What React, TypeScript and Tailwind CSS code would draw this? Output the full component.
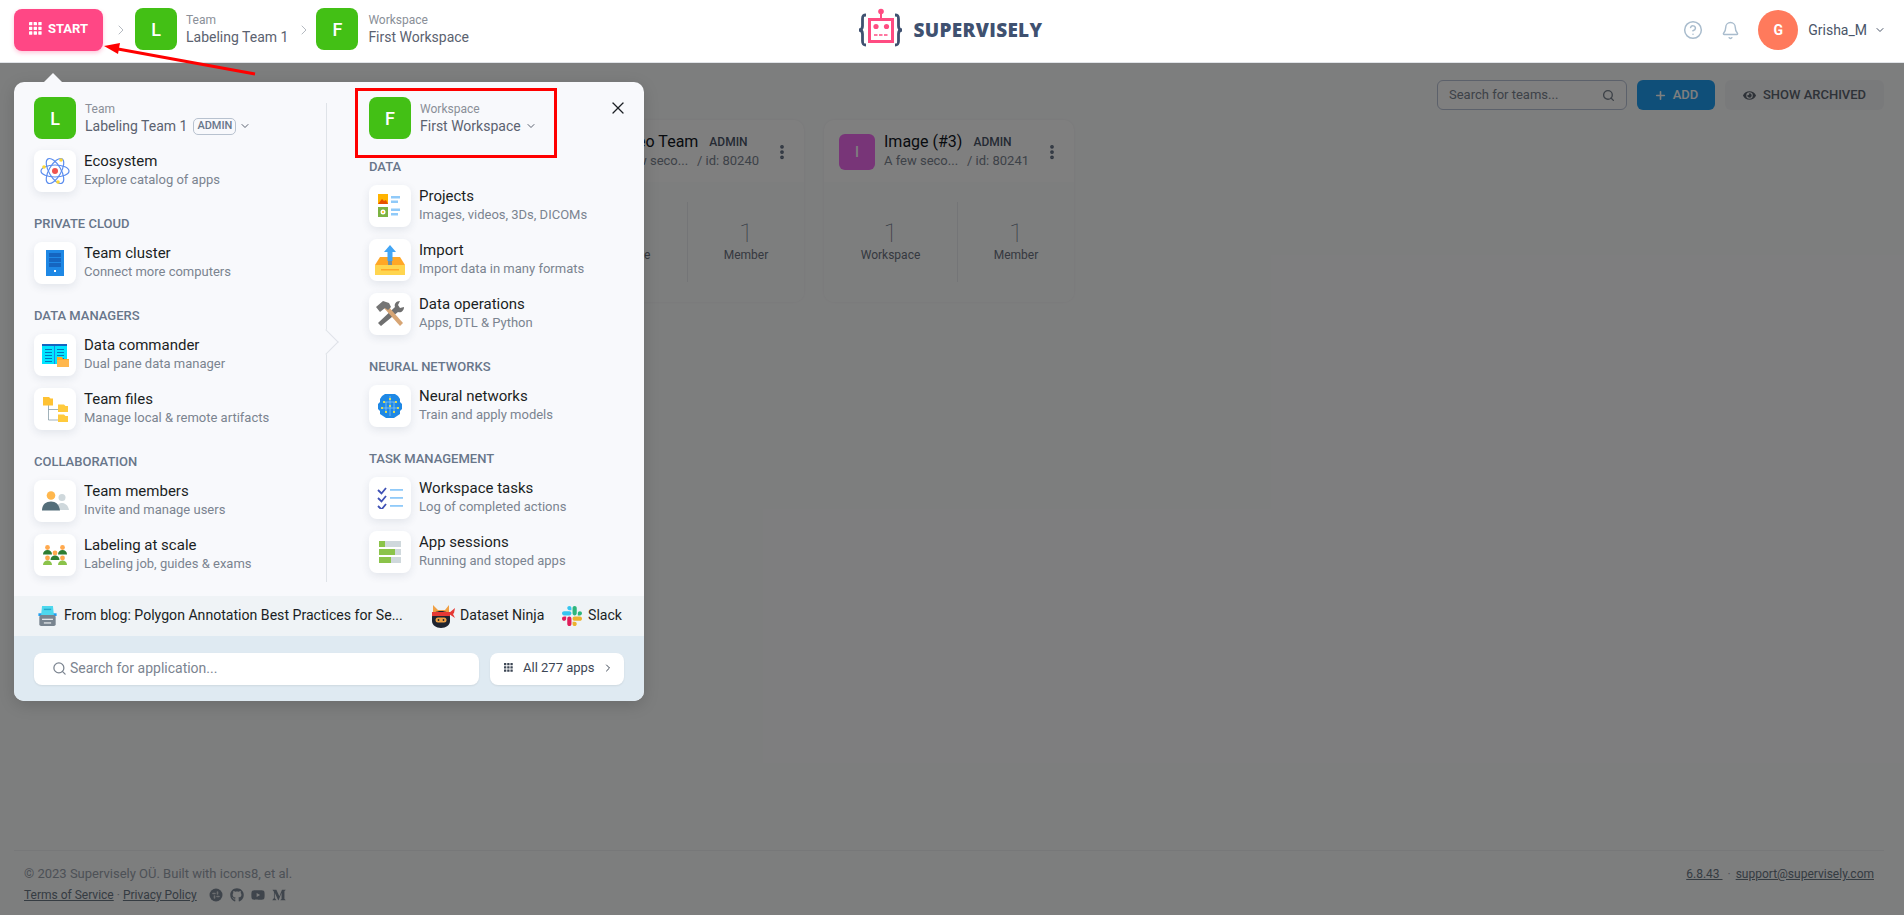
import React from 'react';
import { Bell, ChevronDown, ChevronRight, CircleHelp, MoreVertical, Plus, Search, X } from 'lucide-react';
import { FaEye, FaGithub, FaMediumM, FaYoutube } from 'react-icons/fa';

const Dots: React.FC<{ className?: string }> = ({ className }) => (
  <svg viewBox="0 0 14 14" className={className} fill="currentColor">
    {[0, 5, 10].map((y) =>
      [0, 5, 10].map((x) => <rect key={`${x}-${y}`} x={x} y={y} width="3.6" height="3.6" rx="0.5" />)
    )}
  </svg>
);

const EcosystemIcon = () => (
  <svg viewBox="0 0 30 30" className="h-[30px] w-[30px]" fill="none">
    <g stroke="#5b8def" strokeWidth="1.2">
      <ellipse cx="15" cy="15" rx="14" ry="6" />
      <ellipse cx="15" cy="15" rx="14" ry="6" transform="rotate(60 15 15)" />
      <ellipse cx="15" cy="15" rx="14" ry="6" transform="rotate(120 15 15)" />
    </g>
    <circle cx="15" cy="15" r="3" fill="#ef5350" />
    <circle cx="4" cy="11" r="1.8" fill="#fdd835" />
    <circle cx="21" cy="4" r="1.8" fill="#fdd835" />
    <circle cx="18" cy="26" r="1.8" fill="#fdd835" />
  </svg>
);

const ClusterIcon = () => (
  <svg viewBox="0 0 18 26" className="h-[26px] w-[18px]">
    <rect width="18" height="26" fill="#1e88e5" />
    <rect x="3" y="3" width="12" height="4" fill="#1565c0" />
    <rect x="3" y="8" width="12" height="4" fill="#1565c0" />
    <rect x="3" y="13" width="12" height="4" fill="#1565c0" />
    <rect x="8" y="20" width="2" height="2" fill="#fff" />
  </svg>
);

const CommanderIcon = () => (
  <svg viewBox="0 0 27 23" className="h-[23px] w-[27px]">
    <rect y="0" width="25" height="20" fill="#00e5ff" />
    <rect y="0" width="25" height="2" fill="#1565c0" />
    <rect x="12" y="2" width="1" height="18" fill="#1e88e5" />
    {[5, 8, 11, 14, 17].map((y) => (
      <g key={y} fill="#0277bd">
        <rect x="3" y={y} width="7" height="1" />
        <rect x="15" y={y} width="7" height="1" />
      </g>
    ))}
    <path d="M15 13h5l1 2h6v8H15z" fill="#ffa726" />
    <rect x="15" y="16" width="12" height="7" fill="#ffb74d" />
  </svg>
);

const FilesIcon = () => (
  <svg viewBox="0 0 25 25" className="h-[25px] w-[25px]">
    <path d="M5.5 8v15H15M5.5 12.500H15" fill="none" stroke="#78909c" strokeWidth="0.7" />
    <path d="M0 0h6l1.500 1.500H10v7H0z" fill="#ffc233" />
    <path d="M15 7.500h6l1.500 1.500H25v6H15z" fill="#ffca3d" />
    <path d="M15 17.500h6l1.500 1.500H25v6H15z" fill="#ffca3d" />
  </svg>
);

const MembersIcon = () => (
  <svg viewBox="0 0 27 20" className="h-[20px] w-[27px]">
    <circle cx="20" cy="6.500" r="3.500" fill="#cfd8dc" />
    <path d="M13 19c1-5 4-7 7-7s6 2 7 7z" fill="#cfd8dc" />
    <circle cx="9" cy="4.500" r="4.300" fill="#ffb74d" />
    <path d="M0 19.500c0-6 4-9 9-9s8 3 9 9z" fill="#546e7a" />
  </svg>
);

const LabelingIcon = () => {
  const person = (x: number, y: number, fill: string) => (
    <g key={`${x}-${y}`}>
      <circle cx={x} cy={y} r="2.400" fill="#ffa94d" />
      <path d={`M${x - 4.500} ${y + 7}c0-3 2-4.500 4.500-4.500s4.500 1.500 4.500 4.500z`} fill={fill} />
    </g>
  );
  return (
    <svg viewBox="0 0 24 20" className="h-[20px] w-[24px]">
      {person(4.500, 2.500, '#2e7d32')}
      {person(19.500, 2.500, '#2e7d32')}
      {person(12, 8, '#2e7d32')}
      {person(4.500, 13, '#8bc34a')}
      {person(19.500, 13, '#8bc34a')}
    </svg>
  );
};

const ProjectsIcon = () => (
  <svg viewBox="0 0 24 24" className="h-[24px] w-[24px]">
    <rect width="10" height="10" fill="#ffb300" />
    <path d="M0 10l4-5 2 2 2-1 2 4z" fill="#e65100" />
    <rect y="13" width="10" height="10" fill="#7cb342" />
    <circle cx="5" cy="18" r="2.500" fill="#fff" />
    <circle cx="5" cy="18" r="1" fill="#ffb300" />
    <g fill="#90caf9">
      <rect x="13" y="2" width="9" height="2.500" />
      <rect x="13" y="6.500" width="7" height="2.500" />
      <rect x="13" y="14.500" width="9" height="2.500" />
      <rect x="13" y="19" width="7" height="2.500" />
    </g>
  </svg>
);

const ImportIcon = () => (
  <svg viewBox="0 0 30 30" className="h-[30px] w-[30px]">
    <path d="M5 12h20l5 8v10H0V20z" fill="#ffa726" />
    <rect y="20" width="30" height="10" fill="#ffd54f" />
    <rect x="6" y="24" width="18" height="1.500" fill="#ffa726" />
    <rect x="13" y="14" width="4" height="6" fill="#78909c" />
    <path d="M15 0l6 7h-3.500v9h-5V7H9z" fill="#42a5f5" />
  </svg>
);

const ToolsIcon = () => (
  <svg viewBox="0 0 30 26" className="h-[26px] w-[30px]">
    <path d="M3 22L20 6c-1-3 1-6 5-6l-2 4 2 3 4-1c0 4-3 6-6 5L6 25z" fill="#6f6f6f" />
    <path d="M9 7l3-3 16 18-3 3z" fill="#d7a574" />
    <path d="M1 6l7-6 6 2 2 4-3 3-3-2-5 4z" fill="#757575" />
  </svg>
);

const BrainIcon = () => (
  <svg viewBox="0 0 26 26" className="h-[26px] w-[26px]">
    <path d="M8 1h10l3 2 2 3v3l2 2v5l-2 2v3l-3 2-3 2h-8l-3-2-3-2v-3l-2-2v-5l2-2V6l2-3z" fill="#1e88e5" />
    <g stroke="#90caf9" strokeWidth="0.7" fill="none">
      <path d="M13 3v20M7 9h12M5 15h16M9 9v10M17 9v10" />
    </g>
    <g fill="#ffeb3b">
      {[[7, 9], [19, 9], [5, 15], [21, 15], [9, 19], [17, 19], [13, 6], [13, 13]].map(([x, y]) => (
        <rect key={`${x}-${y}`} x={x - 0.9} y={y - 0.9} width="1.800" height="1.800" />
      ))}
    </g>
  </svg>
);

const TasksIcon = () => (
  <svg viewBox="0 0 26 22" className="h-[22px] w-[26px]" fill="none">
    {[0, 8, 16].map((y) => (
      <g key={y}>
        <path d={`M1 ${y + 3}l3.500 3.500L9 ${y + 1}`} stroke="#3f51b5" strokeWidth="1.800" />
        <rect x="13" y={y + 2} width="13" height="1.800" fill="#90caf9" />
      </g>
    ))}
  </svg>
);

const SessionsIcon = () => (
  <svg viewBox="0 0 22 22" className="h-[22px] w-[22px]">
    <rect width="22" height="6" fill="#cfd8dc" />
    <rect width="6" height="6" fill="#8bc34a" />
    <rect y="8" width="22" height="6" fill="#cfd8dc" />
    <rect y="8" width="16" height="6" fill="#8bc34a" />
    <rect y="16" width="22" height="6" fill="#cfd8dc" />
    <rect y="16" width="12" height="6" fill="#8bc34a" />
  </svg>
);

const BlogIcon = () => (
  <svg viewBox="0 0 20 22" className="h-[20px] w-[19px]">
    <path d="M0 8h20v3H0z" fill="#1e9ff2" />
    <path d="M4 0h12l1 10H3z" fill="#4dd8ee" />
    <rect x="6" y="3" width="8" height="1.500" fill="#26a9c9" />
    <rect x="1" y="10" width="18" height="12" rx="2" fill="#78848f" />
    <rect x="4" y="14" width="12" height="1.300" fill="#eceff1" />
    <rect x="6" y="18" width="8" height="1.300" fill="#eceff1" />
  </svg>
);

const NinjaIcon = () => (
  <svg viewBox="0 0 24 24" className="h-[24px] w-[24px]">
    <path d="M2 1l5 5h7l4-5v10H2z" fill="#f0a044" />
    <path d="M1 13c0-4 4-6 9-6s9 2 9 6v4c0 4-4 7-9 7s-9-3-9-7z" fill="#1f2430" />
    <rect x="1" y="8" width="18" height="4" fill="#e53935" />
    <path d="M18 9l6-5-1 5-1 1 2 4-6-4z" fill="#e53935" />
    <rect x="4.500" y="13.500" width="11" height="5" rx="2.500" fill="#f0a044" />
    <circle cx="7.500" cy="16" r="0.900" fill="#1f2430" />
    <circle cx="12.500" cy="16" r="0.900" fill="#1f2430" />
  </svg>
);

const SlackIcon = () => (
  <svg viewBox="0 0 122.800 122.800" className="h-[20px] w-[20px]">
    <path d="M25.800 77.600c0 7.100-5.800 12.900-12.900 12.900S0 84.700 0 77.600s5.800-12.900 12.900-12.900h12.900v12.900zm6.500 0c0-7.100 5.800-12.900 12.900-12.900s12.900 5.800 12.900 12.900v32.300c0 7.100-5.800 12.900-12.900 12.900s-12.900-5.800-12.900-12.900V77.600z" fill="#e01e5a" />
    <path d="M45.200 25.800c-7.100 0-12.900-5.800-12.900-12.900S38.100 0 45.200 0s12.900 5.800 12.900 12.900v12.900H45.200zm0 6.500c7.100 0 12.900 5.800 12.900 12.900s-5.800 12.900-12.900 12.900H12.900C5.800 58.100 0 52.300 0 45.200s5.800-12.900 12.900-12.900h32.300z" fill="#36c5f0" />
    <path d="M97 45.200c0-7.100 5.800-12.900 12.900-12.900s12.900 5.800 12.900 12.900-5.800 12.900-12.900 12.900H97V45.200zm-6.500 0c0 7.100-5.800 12.900-12.900 12.900s-12.900-5.800-12.900-12.900V12.900C64.700 5.800 70.500 0 77.600 0s12.900 5.800 12.900 12.900v32.300z" fill="#2eb67d" />
    <path d="M77.600 97c7.100 0 12.900 5.800 12.900 12.900s-5.800 12.900-12.900 12.900-12.900-5.800-12.900-12.900V97h12.900zm0-6.500c-7.100 0-12.900-5.800-12.900-12.900s5.800-12.900 12.900-12.900h32.300c7.100 0 12.900 5.800 12.900 12.900s-5.800 12.900-12.900 12.900H77.600z" fill="#ecb22e" />
  </svg>
);

const SocialDot = () => (
  <svg viewBox="0 0 14 14" className="h-[14px] w-[14px]">
    <circle cx="7" cy="7" r="6.500" fill="#7f8b98" />
    <g stroke="#fff" strokeWidth="1.600" strokeLinecap="round" opacity="0.7">
      <path d="M4 5.500h2M8 8.500h2M5.500 8v2M8.500 4v2" />
    </g>
  </svg>
);

const Logo = () => (
  <div className="flex shrink-0 items-center gap-[10px]">
    <svg viewBox="0 0 46 44" className="h-[44px] w-[46px]" fill="none">
      <path d="M8 7c-3 0-3.500 1-3.500 4v7c0 2-1 4-3.500 4 2.500 0 3.500 2 3.500 4v7c0 3 .5 4 3.500 4M37 7c3 0 3.500 1 3.500 4v7c0 2 1 4 3.500 4-2.500 0-3.500 2-3.500 4v7c0 3-.5 4-3.500 4" stroke="#3f5170" strokeWidth="2.800" />
      <rect x="11.500" y="11.500" width="23" height="22" stroke="#ff4c82" strokeWidth="3" />
      <path d="M23 11V4" stroke="#ff4c82" strokeWidth="2" />
      <circle cx="23" cy="3.500" r="2.800" fill="#ff4c82" />
      <circle cx="18" cy="18.500" r="2.600" fill="#ff4c82" />
      <circle cx="28.500" cy="18.500" r="2.600" fill="#ff4c82" />
      <path d="M16 27h15" stroke="#ff4c82" strokeWidth="1.600" strokeDasharray="3.500 1.500" />
    </svg>
    <span className="font-['Open_Sans',sans-serif] text-[19px] leading-none font-extrabold tracking-[0.3px] text-[#3f5170]">SUPERVISELY</span>
  </div>
);

const Tile: React.FC<{ children: React.ReactNode; className?: string }> = ({ children, className }) => (
  <div className={`flex h-[42px] w-[42px] shrink-0 items-center justify-center rounded-[8px] ${className ?? ''}`}>{children}</div>
);

const GreenTile: React.FC<{ letter: string }> = ({ letter }) => (
  <Tile className="bg-[#43c015] text-[18px] font-medium text-white">{letter}</Tile>
);

const NameBlock: React.FC<{ label: string; name: string; children?: React.ReactNode }> = ({ label, name, children }) => (
  <div className="min-w-0 pt-[5px]">
    <div className="text-[12px] leading-[14px] text-[#8a8f98]">{label}</div>
    <div className="mt-[1px] flex items-center text-[14px] leading-[18px] text-[#5b6270]">
      {name}
      {children}
    </div>
  </div>
);

const MenuRow: React.FC<{ icon: React.ReactNode; title: string; sub: string }> = ({ icon, title, sub }) => (
  <div className="flex items-center gap-[8px]">
    <Tile className="bg-white shadow-[0_3px_8px_rgba(40,60,90,0.1)]">{icon}</Tile>
    <div className="min-w-0 pb-[2px]">
      <div className="text-[15px] leading-[20px] text-[#1b1f24]">{title}</div>
      <div className="text-[13px] leading-[18px] text-[#7b8490]">{sub}</div>
    </div>
  </div>
);

const SectionLabel: React.FC<{ children: React.ReactNode; className?: string }> = ({ children, className }) => (
  <div className={`text-[13px] leading-[16px] font-medium text-[#68768a] uppercase ${className ?? 'mt-[24px] mb-[10px]'}`}>{children}</div>
);

const Stat: React.FC<{ label: string; className: string }> = ({ label, className }) => (
  <div className={`pb-[2px] text-center ${className}`}>
    <div className="text-[26px] leading-[30px] font-thin text-[#5c6b80]">1</div>
    <div className="-mt-[2px] text-[12px] leading-[18px] text-[#6b7280]">{label}</div>
  </div>
);

const Card: React.FC<{ letter: string; color: string; title: string; id: string }> = ({ letter, color, title, id }) => (
  <div className="h-[182px] w-[250px] shrink-0 rounded-[10px] bg-white shadow-[0_0_3px_rgba(0,0,0,0.06)]">
    <div className="flex h-[62px] items-center gap-[9px] pt-[2px] pr-[13px] pl-[15px]">
      <div className={`flex h-[36px] w-[36px] shrink-0 items-center justify-center rounded-[6px] text-[14px] font-medium text-white ${color}`}>{letter}</div>
      <div className="min-w-0 flex-1 pb-[4px]">
        <div className="flex items-center gap-[11px]">
          <span className="text-[16px] leading-[22px] whitespace-nowrap text-[#11161d]">{title}</span>
          <span className="text-[12px] font-medium text-[#4a5568]">ADMIN</span>
        </div>
        <div className="flex text-[13px] leading-[16px] text-[#7b8490]">
          <span className="w-[73px] whitespace-nowrap">A few seco...</span>
          <span className="ml-[10px] whitespace-nowrap">/ id: {id}</span>
        </div>
      </div>
      <MoreVertical className="h-[18px] w-[18px] shrink-0 text-[#5c6b80]" strokeWidth={3} />
    </div>
    <div className="flex h-[120px] items-center rounded-b-[10px] bg-[#fbfcfd] py-[20px]">
      <Stat label="Workspace" className="w-[133px]" />
      <div className="h-full w-px bg-[#e8ebef]" />
      <Stat label="Member" className="flex-1" />
    </div>
  </div>
);

const StartMenu = () => (
  <div className="absolute top-[82px] left-[14px] w-[630px] rounded-[10px] bg-[#f8f9fc] shadow-[0_4px_16px_rgba(0,0,0,0.15)]">
    <div className="absolute -top-[9px] left-[30px] h-0 w-0 border-x-[9px] border-b-[9px] border-x-transparent border-b-[#f8f9fc]" />
    <button type="button" className="absolute top-[16px] right-[16px] text-[#1b1f24]">
      <X className="h-[20px] w-[20px]" strokeWidth={1.500} />
    </button>

    <div className="flex h-[514px]">
      <div className="w-[312px] pt-[15px] pl-[20px]">
        <div className="flex gap-[9px]">
          <GreenTile letter="L" />
          <NameBlock label="Team" name="Labeling Team 1">
            <span className="ml-[6px] flex h-[17px] items-center rounded-[5px] border border-[#b8c2cf] px-[3px] text-[11px] font-medium text-[#68768a]">ADMIN</span>
            <ChevronDown className="ml-[3px] h-[12px] w-[12px]" />
          </NameBlock>
        </div>
        <div className="mt-[11px]">
          <MenuRow icon={<EcosystemIcon />} title="Ecosystem" sub="Explore catalog of apps" />
        </div>
        <SectionLabel>Private cloud</SectionLabel>
        <MenuRow icon={<ClusterIcon />} title="Team cluster" sub="Connect more computers" />
        <SectionLabel>Data managers</SectionLabel>
        <div className="flex flex-col gap-[12px]">
          <MenuRow icon={<CommanderIcon />} title="Data commander" sub="Dual pane data manager" />
          <MenuRow icon={<FilesIcon />} title="Team files" sub="Manage local & remote artifacts" />
        </div>
        <SectionLabel>Collaboration</SectionLabel>
        <div className="flex flex-col gap-[12px]">
          <MenuRow icon={<MembersIcon />} title="Team members" sub="Invite and manage users" />
          <MenuRow icon={<LabelingIcon />} title="Labeling at scale" sub="Labeling job, guides & exams" />
        </div>
      </div>

      <div className="relative mt-[21px] mb-[14px] w-px bg-[#dfe3e8]">
        <div className="absolute top-[230px] -left-[9px] h-[18px] w-[18px] rotate-45 border-t border-r border-[#dfe3e8] bg-[#f8f9fc]" />
      </div>

      <div className="flex-1 pt-[15px] pl-[42px]">
        <div className="flex gap-[9px]">
          <GreenTile letter="F" />
          <NameBlock label="Workspace" name="First Workspace">
            <ChevronDown className="ml-[4px] h-[12px] w-[12px]" />
          </NameBlock>
        </div>
        <SectionLabel className="mt-[20px] mb-[10px]">Data</SectionLabel>
        <div className="flex flex-col gap-[12px]">
          <MenuRow icon={<ProjectsIcon />} title="Projects" sub="Images, videos, 3Ds, DICOMs" />
          <MenuRow icon={<ImportIcon />} title="Import" sub="Import data in many formats" />
          <MenuRow icon={<ToolsIcon />} title="Data operations" sub="Apps, DTL & Python" />
        </div>
        <SectionLabel>Neural networks</SectionLabel>
        <MenuRow icon={<BrainIcon />} title="Neural networks" sub="Train and apply models" />
        <SectionLabel>Task management</SectionLabel>
        <div className="flex flex-col gap-[12px]">
          <MenuRow icon={<TasksIcon />} title="Workspace tasks" sub="Log of completed actions" />
          <MenuRow icon={<SessionsIcon />} title="App sessions" sub="Running and stoped apps" />
        </div>
      </div>
    </div>

    <div className="flex h-[40px] items-center bg-[#eff3f6] pr-[22px] pl-[24px] text-[14.1px] text-[#1b1f24]">
      <BlogIcon />
      <span className="ml-[7px] w-[342px] whitespace-nowrap">From blog: Polygon Annotation Best Practices for Se...</span>
      <span className="ml-[25px] flex items-center gap-[5px]"><NinjaIcon />Dataset Ninja</span>
      <span className="ml-auto flex items-center gap-[6px]"><SlackIcon />Slack</span>
    </div>

    <div className="flex h-[65px] items-center gap-[11px] rounded-b-[10px] bg-[#dfeaf2] px-[20px]">
      <div className="flex h-[32px] flex-1 items-center rounded-[8px] bg-white pl-[18px] text-[14px] text-[#7b8490] shadow-[0_1px_2px_rgba(0,0,0,0.08)]">
        <Search className="mr-[3px] h-[15px] w-[15px]" />
        Search for application...
      </div>
      <div className="flex h-[32px] w-[134px] items-center rounded-[8px] bg-white pb-[2px] pl-[14px] text-[13px] text-[#3c4654] shadow-[0_1px_2px_rgba(0,0,0,0.08)]">
        <Dots className="mr-[10px] h-[9px] w-[9px]" />
        All 277 apps
        <ChevronRight className="ml-[7px] h-[12px] w-[12px]" />
      </div>
    </div>
  </div>
);

const App: React.FC = () => (
  <div className="relative flex h-[915px] w-full flex-col overflow-hidden bg-[#fbfcfd] font-['Roboto',sans-serif]">
    <header className="relative z-10 flex h-[63px] shrink-0 items-center border-b border-[#e1e4e8] bg-white pr-[20px] pb-[2px] pl-[14px]">
      <div className="flex flex-1 items-center">
        <div className="flex h-[42px] w-[89px] items-center justify-center gap-[6px] rounded-[8px] bg-[#ff4785] pb-[3px] text-[13px] font-bold text-white shadow-[0_2px_4px_rgba(255,71,133,0.3)]">
          <Dots className="h-[13px] w-[13px]" />
          START
        </div>
        <ChevronRight className="mr-[6px] ml-[10px] h-[16px] w-[16px] text-[#b5bac1]" strokeWidth={1.500} />
        <div className="mb-[2px] flex gap-[9px]">
          <GreenTile letter="L" />
          <NameBlock label="Team" name="Labeling Team 1" />
        </div>
        <ChevronRight className="mr-[4px] ml-[8px] h-[16px] w-[16px] text-[#b5bac1]" strokeWidth={1.500} />
        <div className="mb-[2px] flex gap-[10px]">
          <GreenTile letter="F" />
          <NameBlock label="Workspace" name="First Workspace" />
        </div>
      </div>
      <Logo />
      <div className="-mr-[2px] flex flex-1 items-center justify-end">
        <CircleHelp className="h-[20px] w-[20px] text-[#a9bccd]" strokeWidth={1.800} />
        <Bell className="ml-[18px] h-[19px] w-[19px] text-[#a9bccd]" strokeWidth={1.800} />
        <div className="ml-[18px] flex h-[40px] w-[40px] items-center justify-center rounded-full bg-[#ff7a5c] text-[14px] font-bold text-white">G</div>
        <span className="ml-[10px] text-[14px] text-[#4a5568]">Grisha_M</span>
        <ChevronDown className="ml-[7px] h-[12px] w-[12px] text-[#4a5568]" />
      </div>
    </header>

    <main className="flex flex-1 flex-col pt-[17px] pr-[20px] pl-[14px]">
      <div className="flex justify-end gap-[10px]">
        <div className="flex h-[30px] w-[190px] items-center justify-between rounded-[6px] border border-[#b8c2d6] bg-white px-[11px] text-[13px] text-[#7b8490]">
          Search for teams...
          <Search className="h-[13px] w-[13px]" strokeWidth={2.500} />
        </div>
        <div className="flex h-[30px] w-[78px] items-center justify-center gap-[6px] rounded-[6px] bg-[#1e9ff2] text-[13px] font-medium text-white">
          <Plus className="h-[13px] w-[13px]" strokeWidth={3} />
          ADD
        </div>
        <div className="flex h-[30px] w-[159px] items-center justify-center gap-[7px] rounded-[6px] bg-[#f3f4f6] text-[13px] font-medium text-[#5c6570]">
          <FaEye className="h-[13px] w-[13px]" />
          SHOW ARCHIVED
        </div>
      </div>
      <div className="mt-[10px] flex gap-[20px]">
        <div className="h-[182px] w-[250px] shrink-0" />
        <div className="h-[182px] w-[250px] shrink-0" />
        <Card letter="V" color="bg-[#f0932b]" title="Video Team" id="80240" />
        <Card letter="I" color="bg-[#f06af0]" title="Image (#3)" id="80241" />
      </div>
      <footer className="mt-auto mb-[9px] flex h-[56px] justify-between border-t border-[#eef0f2] pr-[10px] pl-[10px] text-[#9aa3ad]">
        <div className="pt-[14px]">
          <div className="text-[13px] leading-[18px]">© 2023 Supervisely OÜ. Built with icons8, et al.</div>
          <div className="mt-[3px] flex items-center text-[12px] leading-[18px]">
            <span className="text-[#6b7885] underline">Terms of Service</span>
            <span className="mx-[3px]">·</span>
            <span className="text-[#6b7885] underline">Privacy Policy</span>
            <span className="ml-[12px] flex items-center gap-[7px] text-[14px] text-[#7f8b98]">
              <SocialDot />
              <FaGithub />
              <FaYoutube />
              <FaMediumM />
            </span>
          </div>
        </div>
        <div className="pt-[14px] text-[12px] leading-[18px]">
          <span className="whitespace-pre text-[#6b7885] underline">6.8.43 </span>
          <span className="mx-[5px]">·</span>
          <span className="text-[#6b7885] underline">support@supervisely.com</span>
        </div>
      </footer>
    </main>

    <div className="absolute inset-x-0 top-[63px] bottom-0 bg-black/50" />

    <StartMenu />

    <div className="absolute top-[88px] left-[355px] h-[70px] w-[202px] border-[3px] border-[#ff0000]" />
    <svg className="absolute top-[40px] left-[100px] z-20 h-[40px] w-[160px]" viewBox="0 0 160 40">
      <path d="M155 34L18 9" stroke="#ff0000" strokeWidth="3" />
      <path d="M4 6l16-3-2 11z" fill="#ff0000" />
    </svg>
  </div>
);

export default App;
